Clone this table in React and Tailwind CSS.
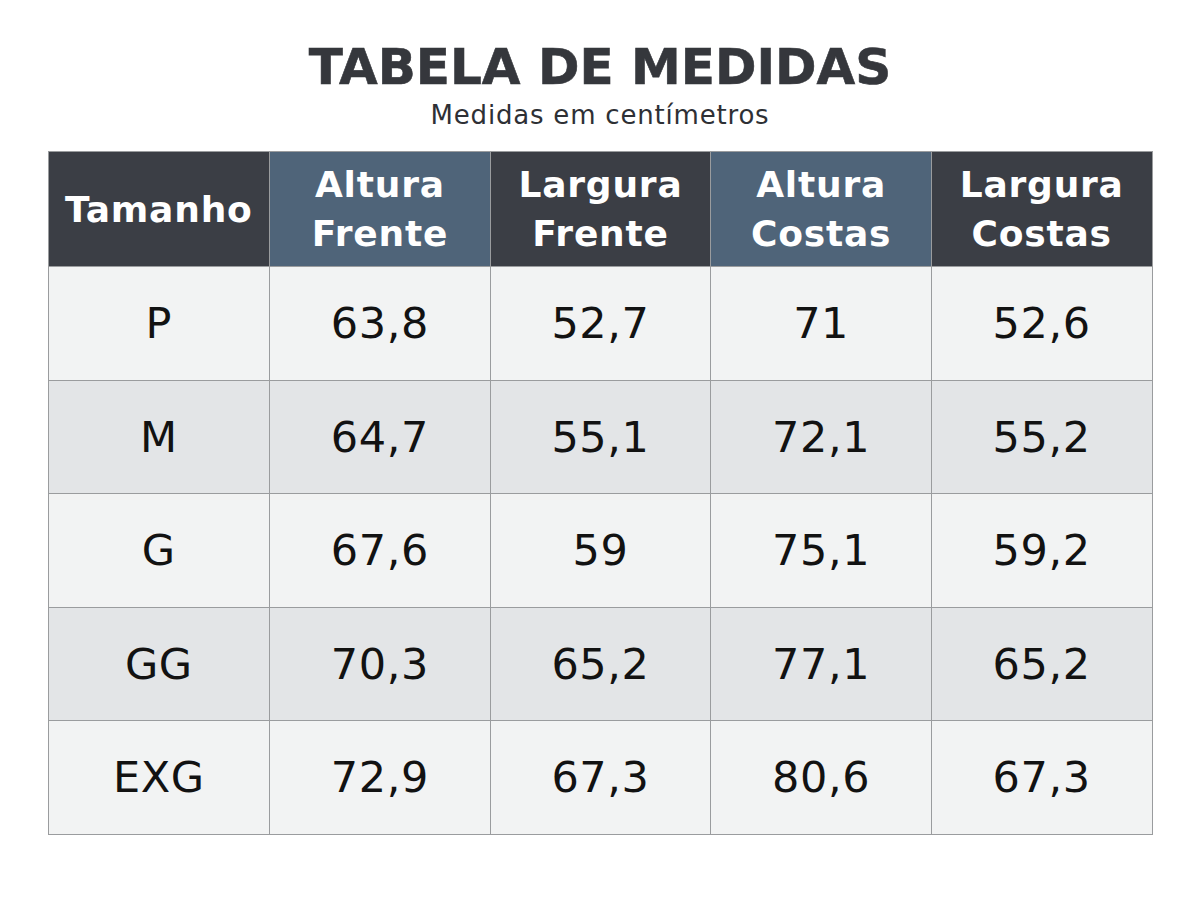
import React from "react";

const headers = [
  { l1: "Tamanho", l2: null, bg: "bg-[#3b3e45]" },
  { l1: "Altura", l2: "Frente", bg: "bg-[#4f6479]" },
  { l1: "Largura", l2: "Frente", bg: "bg-[#3b3e45]" },
  { l1: "Altura", l2: "Costas", bg: "bg-[#4f6479]" },
  { l1: "Largura", l2: "Costas", bg: "bg-[#3b3e45]" },
];

const rows = [
  ["P", "63,8", "52,7", "71", "52,6"],
  ["M", "64,7", "55,1", "72,1", "55,2"],
  ["G", "67,6", "59", "75,1", "59,2"],
  ["GG", "70,3", "65,2", "77,1", "65,2"],
  ["EXG", "72,9", "67,3", "80,6", "67,3"],
];

export default function App() {
  return (
    <div
      className="w-[1200px] h-[900px] bg-white flex flex-col items-center"
      style={{ fontFamily: '"DejaVu Sans", "Open Sans", sans-serif' }}
    >
      <h1 className="mt-[38px] text-[50px] leading-[58px] font-bold text-[#35373c] [-webkit-text-stroke:0.6px_#35373c]">
        TABELA DE MEDIDAS
      </h1>
      <p className="mt-[3px] text-[26px] leading-[32px] tracking-[0.8px] text-[#2e3035]">Medidas em centímetros</p>
      <div className="mt-[20px] w-[1105px] border border-[#9a9c9e] grid grid-cols-5">
        {headers.map((h, i) => (
          <div
            key={i}
            className={`${h.bg} h-[114px] flex flex-col items-center justify-center text-white font-bold text-[36px] leading-[49px] tracking-[0.8px] ${i > 0 ? "border-l border-[#9a9c9e]" : ""}`}
          >
            <span>{h.l1}</span>
            {h.l2 && <span>{h.l2}</span>}
          </div>
        ))}
        {rows.map((r, ri) =>
          r.map((c, ci) => (
            <div
              key={ri + "-" + ci}
              className={`${ri % 2 === 0 ? "bg-[#f2f3f3]" : "bg-[#e3e5e7]"} h-[113.5px] flex items-center justify-center text-[43px] tracking-[0.6px] text-[#121212] border-t border-[#9a9c9e] ${ci > 0 ? "border-l" : ""}`}
            >
              {c}
            </div>
          ))
        )}
      </div>
    </div>
  );
}
